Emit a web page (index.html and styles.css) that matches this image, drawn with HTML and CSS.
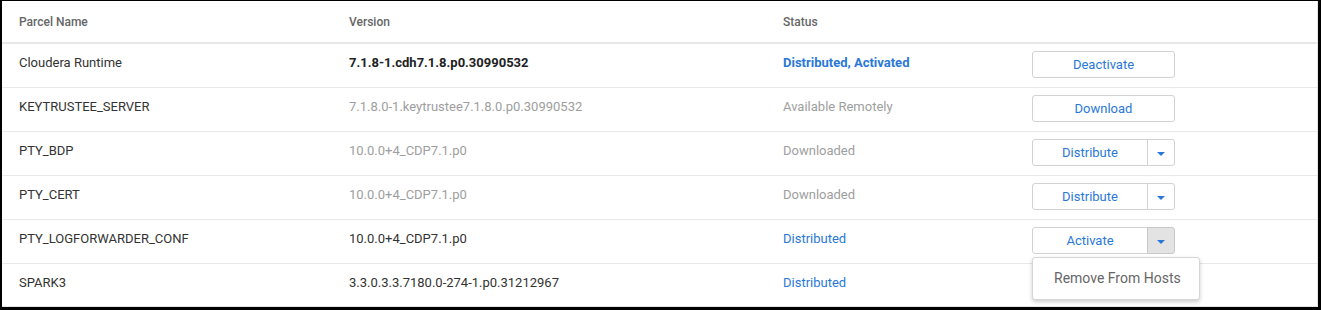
FILE: index.html
```html
<!DOCTYPE html>
<html lang="en">
<head>
    <meta charset="UTF-8">
    <title>Parcels</title>
    <link rel="stylesheet" href="styles.css">
</head>
<body>
    <div class="frame">
        <table class="parcels">
            <thead>
                <tr>
                    <th class="col-name">Parcel Name</th>
                    <th class="col-version">Version</th>
                    <th class="col-status">Status</th>
                    <th class="col-action"></th>
                </tr>
            </thead>
            <tbody>
                <tr>
                    <td>Cloudera Runtime</td>
                    <td class="strong">7.1.8-1.cdh7.1.8.p0.30990532</td>
                    <td class="status strong">Distributed, Activated</td>
                    <td class="action"><button class="btn">Deactivate</button></td>
                </tr>
                <tr>
                    <td>KEYTRUSTEE_SERVER</td>
                    <td class="muted">7.1.8.0-1.keytrustee7.1.8.0.p0.30990532</td>
                    <td class="muted">Available Remotely</td>
                    <td class="action"><button class="btn">Download</button></td>
                </tr>
                <tr>
                    <td>PTY_BDP</td>
                    <td class="muted">10.0.0+4_CDP7.1.p0</td>
                    <td class="muted">Downloaded</td>
                    <td class="action">
                        <div class="split">
                            <button class="btn main">Distribute</button>
                            <button class="btn caret"><span class="tri"></span></button>
                        </div>
                    </td>
                </tr>
                <tr>
                    <td>PTY_CERT</td>
                    <td class="muted">10.0.0+4_CDP7.1.p0</td>
                    <td class="muted">Downloaded</td>
                    <td class="action">
                        <div class="split">
                            <button class="btn main">Distribute</button>
                            <button class="btn caret"><span class="tri"></span></button>
                        </div>
                    </td>
                </tr>
                <tr>
                    <td>PTY_LOGFORWARDER_CONF</td>
                    <td>10.0.0+4_CDP7.1.p0</td>
                    <td class="status">Distributed</td>
                    <td class="action">
                        <div class="split open">
                            <button class="btn main">Activate</button>
                            <button class="btn caret active"><span class="tri"></span></button>
                            <ul class="menu">
                                <li>Remove From Hosts</li>
                            </ul>
                        </div>
                    </td>
                </tr>
                <tr>
                    <td>SPARK3</td>
                    <td>3.3.0.3.3.7180.0-274-1.p0.31212967</td>
                    <td class="status">Distributed</td>
                    <td class="action"></td>
                </tr>
            </tbody>
        </table>
    </div>
</body>
</html>
```

FILE: styles.css
```css
body {
    margin: 0;
    font-family: Roboto, "Liberation Sans", Arial, sans-serif;
    background-color: #000;
}
.frame {
    width: 1321px;
    height: 310px;
    box-sizing: border-box;
    border-style: solid;
    border-color: #000;
    border-width: 1px 3px 3px 2px;
    background: white;
    overflow: hidden;
}
.parcels {
    width: 1316px;
    border-collapse: collapse;
    table-layout: fixed;
    border-right: 1px solid #e6e6e6;
    border-bottom: 1px solid #e6e6e6;
    font-size: 13px;
    color: #333;
}
.parcels th {
    height: 41px;
    padding: 0 0 0 17px;
    text-align: left;
    font-size: 12px;
    font-weight: 500;
    color: #666;
    border-bottom: 2px solid #e8e8e8;
    vertical-align: middle;
}
.col-name { width: 313px; }
.col-version { width: 417px; }
.col-status { width: 232px; }
.parcels td {
    height: 32px;
    padding: 11px 0 0 17px;
    line-height: 16px;
    vertical-align: top;
    border-bottom: 1px solid #e8e8e8;
    white-space: nowrap;
}
.parcels tbody tr:last-child td {
    height: 31px;
    border-bottom: none;
}
.parcels td.action {
    height: 36px;
    padding-top: 7px;
}
.parcels tbody tr:last-child td.action {
    height: 35px;
}
.strong {
    font-weight: bold;
    color: #222;
}
.muted {
    color: #9e9e9e;
}
.status {
    color: #2a78d6;
}
.status.strong {
    color: #2a78d6;
}
.btn {
    display: block;
    width: 143px;
    height: 27px;
    padding: 0;
    background: white;
    border: 1px solid #d2d2d2;
    border-radius: 3px;
    font-family: inherit;
    font-size: 13px;
    color: #2a78d6;
    cursor: pointer;
}
.split {
    position: relative;
    display: flex;
    width: 143px;
}
.split .main {
    width: 116px;
    border-radius: 3px 0 0 3px;
}
.split .caret {
    width: 28px;
    margin-left: -1px;
    border-radius: 0 3px 3px 0;
    display: flex;
    align-items: center;
    justify-content: center;
}
.split .caret.active {
    background-color: #e3e3e3;
    border-color: #c8c8c8;
}
.tri {
    width: 0;
    height: 0;
    border-left: 4px solid transparent;
    border-right: 4px solid transparent;
    border-top: 4px solid #2a78d6;
    margin-top: 2px;
}
.menu {
    position: absolute;
    top: 30px;
    left: 0;
    width: 168px;
    height: 43px;
    box-sizing: border-box;
    margin: 0;
    padding: 0;
    list-style: none;
    background: white;
    border: 1px solid #d6d6d6;
    border-radius: 3px;
    box-shadow: 0 2px 4px rgba(0, 0, 0, 0.2);
    z-index: 2;
}
.menu li {
    padding: 12px 0 0 21px;
    font-size: 14px;
    line-height: 17px;
    color: #666;
    white-space: nowrap;
}
```
